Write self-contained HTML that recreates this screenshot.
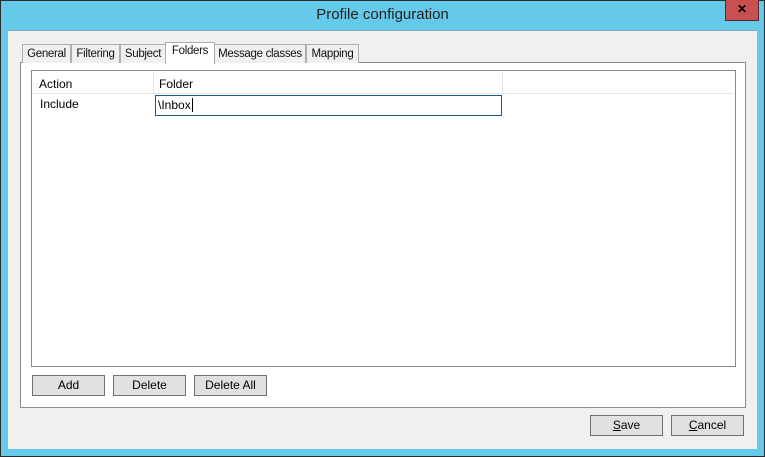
<!DOCTYPE html><html><head><style>
*{box-sizing:border-box;margin:0;padding:0}
body{width:765px;height:457px;background:#65c9e9;font-family:"Liberation Sans",sans-serif;font-size:12px;color:#000;position:relative;overflow:hidden}
.frame{position:absolute;left:0;top:0;width:765px;height:457px;border:1px solid #2b2b2b}
.title{position:absolute;left:0;width:765px;top:6px;text-align:center;font-size:15px;color:#222}
.close{position:absolute;left:725px;top:0;width:34px;height:21px;background:#c75050;border:1px solid #5a2a2a;border-top:none;color:#000;font-weight:bold;text-align:center;font-size:12px;line-height:19px}
.client{position:absolute;left:8px;top:30px;width:749px;height:419px;background:#f0f0f0;border-top:1px solid #8ab}
.abs{position:absolute}
.tab{position:absolute;top:44px;height:19px;border:1px solid #adadad;border-bottom:none;background:#f0f0f0;font-size:11.5px;padding:3px 0 0;text-align:center;color:#111;white-space:nowrap;letter-spacing:-0.3px}
.panel{position:absolute;left:20px;top:62px;width:726px;height:346px;background:#fff;border:1px solid #898c95}
.btn{position:absolute;height:21px;width:73px;background:#e1e1e1;border:1px solid #707070;text-align:center;line-height:19px;font-size:12px}
</style></head><body>
<div class="frame"></div>
<div class="title">Profile configuration</div>
<div class="close">✕</div>
<div class="client"></div>
<div class="panel"></div>
<div class="tab" style="left:22px;width:49px">General</div>
<div class="tab" style="left:71px;width:49px">Filtering</div>
<div class="tab" style="left:120px;width:46px">Subject</div>
<div class="tab" style="left:306px;width:53px">Mapping</div>
<div class="tab" style="left:214px;width:92px">Message classes</div>
<div class="tab" style="left:165px;width:50px;top:42px;height:22px;background:#fff;z-index:2;padding-top:2px">Folders</div>
<div class="abs" style="left:31px;top:70px;width:705px;height:297px;border:1px solid #828790;background:#fff"></div>
<div class="abs" style="left:33px;top:73px;width:701px;height:21px;background:#fff;border-bottom:1px solid #e5e5e5"></div>
<div class="abs" style="left:153px;top:73px;width:1px;height:21px;background:#e5e5e5"></div>
<div class="abs" style="left:502px;top:73px;width:1px;height:21px;background:#e5e5e5"></div>
<div class="abs" style="left:39px;top:77px">Action</div>
<div class="abs" style="left:159px;top:77px">Folder</div>
<div class="abs" style="left:40px;top:97px">Include</div>
<div class="abs" style="left:155px;top:95px;width:347px;height:21px;border:1px solid #1e5a8c;background:#fff;padding:2px 0 0 2px">\Inbox<span style="border-left:1px solid #000;margin-left:1px"></span></div>
<div class="btn" style="left:32px;top:375px">Add</div>
<div class="btn" style="left:113px;top:375px">Delete</div>
<div class="btn" style="left:194px;top:375px">Delete All</div>
<div class="btn" style="left:590px;top:415px"><u>S</u>ave</div>
<div class="btn" style="left:671px;top:415px"><u>C</u>ancel</div>
</body></html>
